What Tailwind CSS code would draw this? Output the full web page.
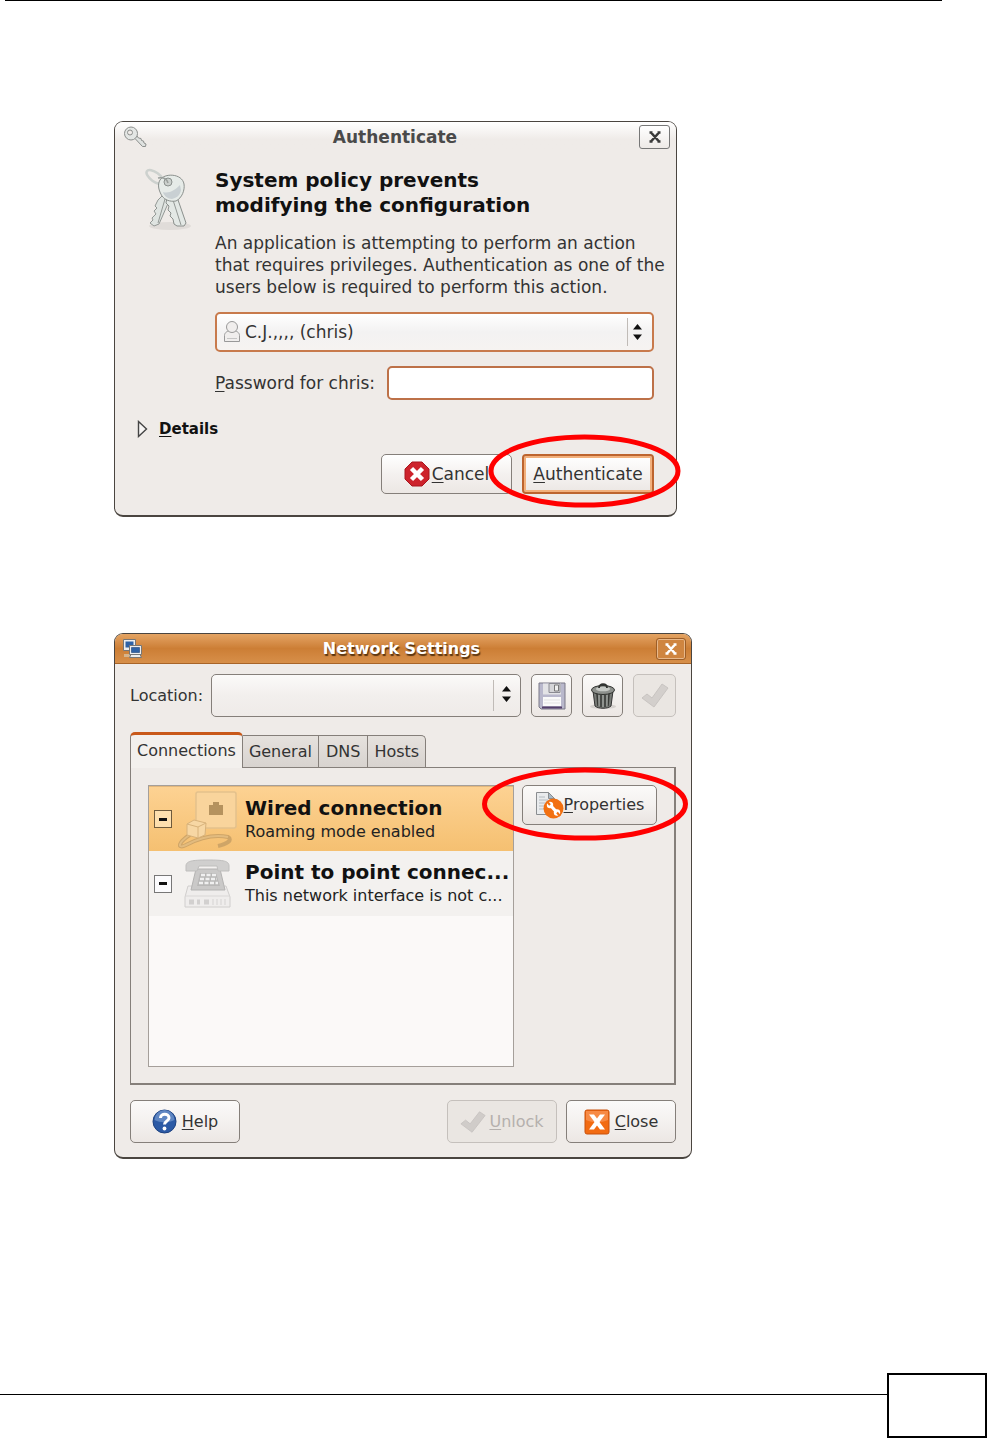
<!DOCTYPE html>
<html lang="en">
<head>
  <meta charset="UTF-8" />
  <meta name="viewport" content="width=device-width, initial-scale=1.0"/>
  <title>Network Settings</title>
  <script src="https://cdn.jsdelivr.net/npm/@tailwindcss/browser@4"></script>
</head>
<body class="min-h-screen flex flex-col bg-white text-[#333] text-base leading-[22px] font-['DejaVu_Sans','Liberation_Sans',sans-serif]">

  <!-- Page header rule -->
  <header class="ml-[5px] mr-[45px] border-t border-black"></header>

  <main class="grow pl-[114px] pr-4 pt-[120px]">

    <!-- Authenticate dialog -->
    <section class="max-w-[563px] bg-[#efebe8] border border-b-2 border-[#4a4540] rounded-[9px] text-[17px] leading-[22px]">
      <div class="h-[29px] pl-2 pr-1.5 flex items-center justify-between rounded-t-lg bg-linear-to-b from-white to-[#efebe8] to-60%">
        <svg class="w-6 h-6" viewBox="0 0 24 24" fill="none">
          <path d="M12 13.500l7.500 8h3l.5-2.500-2-1-.5-2-2-.5-.5-2-2.500-.5-1.500-2" fill="#dfe2e0" stroke="#8c8f8d"/>
          <circle cx="8" cy="8.500" r="6.500" fill="#e3e6e4" stroke="#8c8f8d"/>
          <circle cx="7" cy="7.500" r="2.500" fill="#efebe8" stroke="#8c8f8d"/>
        </svg>
        <h1 class="ml-1 font-bold text-[#4a4a4a]">Authenticate</h1>
        <button aria-label="Close" class="w-[31px] h-6 flex items-center justify-center rounded-[3px] border border-[#777] bg-linear-to-b from-white to-[#eeeae7]">
          <svg class="w-3 h-3" viewBox="0 0 12 12" stroke="#3a3a3a" stroke-width="2.600"><path d="M2 1.500l8 9M10 1.500l-8 9M.5 1.500h3M8.500 1.500h3M.5 10.500h3M8.500 10.500h3" /></svg>
        </button>
      </div>

      <div class="pt-[17px] px-[22px] pb-[21px]">
        <div class="flex">
          <svg class="w-[56px] h-[64px] ml-1 shrink-0" viewBox="0 0 56 64" fill="none">
            <ellipse cx="29" cy="58" rx="21" ry="4" fill="#e0dcd9"/>
            <ellipse cx="14" cy="9" rx="10" ry="4.500" transform="rotate(36 14 9)" stroke="#cdd1ce" stroke-width="2.500"/>
            <path d="M21 28l-4 4-3 6 2 2-3 3 2 3-4 4 1 2-3 3 4 3 5-2 11-25z" fill="#dfe4e1" stroke="#939895"/>
            <path d="M24 31l-7 24" stroke="#939895"/>
            <path d="M26 30l-1 5 3 3-1 4 3 3-1 3 3 3 1 5 3 2h7l2-3-9-26z" fill="#e3e8e5" stroke="#8b908d"/>
            <path d="M32 32l8 25" stroke="#939895"/>
            <path d="M19 12c4-7 22-7 24 4 1 6-2 14-8 17-6 1-11-1-14-5-3-5-5-11-2-16z" fill="#e6ebe8" stroke="#8b908d"/>
            <path d="M22 24c6 2 12-2 17-7l1 5c-1 6-5 8-9 9-4 0-8-3-9-7z" fill="#c9d0d3"/>
            <circle cx="27" cy="14" r="4" fill="#cbd0cd" stroke="#8b908d"/>
            <path d="M17 10c6-1 9 1 10 5" stroke="#999e9b" stroke-width="1.500"/>
          </svg>
          <div class="grow min-w-0 ml-[18px]">
            <h2 class="text-xl leading-[25px] font-bold text-[#111]">System policy prevents<br>modifying the configuration</h2>
            <p class="mt-3.5 whitespace-nowrap">An application is attempting to perform an action<br>that requires privileges. Authentication as one of the<br>users below is required to perform this action.</p>

            <div class="relative mt-3.5">
              <select aria-label="User" class="appearance-none block w-full h-10 pl-7 pr-10 text-[#333] rounded-[5px] border-2 border-[#c87a4c] bg-linear-to-b from-white via-[#f3f2f2] via-50% to-[#f6f3f1]">
                <option>C.J.,,,, (chris)</option>
              </select>
              <svg class="absolute left-2 top-2 w-[18px] h-[23px] pointer-events-none" viewBox="0 0 18 23" fill="#f0eeed" stroke="#999">
                <path d="M1.500 21.500v-6c0-3 3-5 7.500-5s7.500 2 7.500 5v6z"/>
                <circle cx="9" cy="7" r="5.500"/>
                <path d="M4 18.500h10" stroke="#c5c5c5"/>
              </svg>
              <div class="absolute right-[26px] top-1.5 bottom-1.5 border-l border-[#c0bbb7] pointer-events-none"></div>
              <svg class="absolute right-3 top-3 w-[9px] h-4 pointer-events-none" viewBox="0 0 9 16"><path d="M4.500 0L9 5.500H0zM4.500 16L0 10.500h9z" fill="#111"/></svg>
            </div>

            <div class="mt-3.5 flex items-center justify-between">
              <label for="password" class="whitespace-nowrap"><u class="underline-offset-2">P</u>assword for chris:</label>
              <input id="password" type="password" class="w-[267px] h-[34px] px-2 rounded-[5px] border-2 border-[#bd7148] bg-white outline-none">
            </div>
          </div>
        </div>

        <details class="mt-[18px]">
          <summary class="list-none flex items-center gap-[11px] text-[15px] leading-[22px] font-bold text-[#111]">
            <svg class="w-[11px] h-[18px]" viewBox="0 0 11 18" fill="#f7f5f4" stroke="#444" stroke-width="1.400"><path d="M1.500 1.500L9.500 9l-8 7.500z"/></svg>
            <span><u class="underline-offset-2">D</u>etails</span>
          </summary>
        </details>

        <div class="mt-3.5 flex justify-end gap-2.5">
          <button class="w-[131px] h-10 flex items-center justify-center gap-0.5 rounded-[5px] border border-[#857f7a] bg-linear-to-b from-white via-[#f4f1ef] via-50% to-[#ece7e4]">
            <svg class="w-[26px] h-[26px]" viewBox="0 0 26 26">
              <path d="M8 1h10l7 7v10l-7 7H8l-7-7V8z" fill="#cd232c" stroke="#a9161f"/>
              <path d="M7.500 7.500l11 11M18.500 7.500l-11 11" stroke="#fff" stroke-width="4.500"/>
            </svg>
            <span><u class="underline-offset-2">C</u>ancel</span>
          </button>
          <div class="relative">
            <button class="w-[132px] h-10 rounded-[4px] border-2 border-[#bd642e] ring-2 ring-inset ring-[#f2b07c] bg-linear-to-b from-white to-[#ece7e4]"><u class="underline-offset-2">A</u>uthenticate</button>
            <svg class="absolute -left-[34px] -top-5 w-[193px] h-[74px] max-w-none pointer-events-none" viewBox="0 0 193 74" fill="none"><ellipse cx="96.500" cy="37" rx="93.500" ry="34" stroke="#f00" stroke-width="5"/></svg>
          </div>
        </div>
      </div>
    </section>

    <!-- Network Settings dialog -->
    <section class="mt-[116px] max-w-[578px] bg-[#efebe8] border border-b-2 border-[#4a4540] rounded-[9px]">
      <div class="h-[30px] pl-2 pr-[5px] flex items-center justify-between rounded-t-lg border-b border-[#a86428] bg-linear-to-b from-[#e4a463] via-[#cc7e35] via-50% to-[#d78f49]">
        <svg class="w-5 h-5" viewBox="0 0 20 20">
          <path d="M.5.500h12v11H.5z" fill="#eee" stroke="#777"/>
          <path d="M2.500 2.500h8v6h-8z" fill="#2f62a6"/>
          <path d="M1 15h6v3H1z" fill="#d6b48c"/>
          <path d="M6.500 6.500h12v9h-12zM8 15.500h9l1.500 3h-12z" fill="#eee" stroke="#777"/>
          <path d="M8.500 8.500h8v5h-8z" fill="#2f62a6" stroke="#1f4378" stroke-width=".6"/>
        </svg>
        <h1 class="ml-1 font-bold text-white text-shadow-[1px_2px_1px_#5a3410]">Network Settings</h1>
        <button aria-label="Close" class="w-[30px] h-[22px] flex items-center justify-center rounded-[3px] border border-[#9c5e28] ring-1 ring-inset ring-[#e8b88a] bg-[#cf8540]">
          <svg class="w-3 h-3" viewBox="0 0 12 12" stroke="#fff" stroke-width="2.600"><path d="M2 1.500l8 9M10 1.500l-8 9M.5 1.500h3M8.500 1.500h3M.5 10.500h3M8.500 10.500h3" /></svg>
        </button>
      </div>

      <div class="px-[15px] pt-2.5 pb-[14px]">
        <div class="flex items-center">
          <label for="location" class="whitespace-nowrap">Location:</label>
          <div class="relative grow ml-2 mr-2.5">
            <select id="location" class="appearance-none block w-full h-[43px] px-3 rounded-[5px] border border-[#857f7a] bg-linear-to-b from-[#fbfaf9] via-[#f2efed] via-50% to-[#efebe8]">
              <option></option>
            </select>
            <div class="absolute right-[27px] top-1.5 bottom-1.5 border-l border-[#c0bbb7] pointer-events-none"></div>
            <svg class="absolute right-2.5 top-3 w-[9px] h-4 pointer-events-none" viewBox="0 0 9 16"><path d="M4.500 0L9 5.500H0zM4.500 16L0 10.500h9z" fill="#111"/></svg>
          </div>
          <div class="flex gap-2.5">
            <button aria-label="Save location" class="w-[41px] h-[43px] flex items-center justify-center rounded-[5px] border border-[#857f7a] bg-linear-to-b from-[#fbfaf9] to-[#ece7e4]">
              <svg class="w-7 h-7" viewBox="0 0 28 28">
                <path d="M1 1h26v26H3l-2-2z" fill="#b9b8cc" stroke="#7a7987"/>
                <path d="M5 1.500h18v11H5z" fill="#e3e3e6"/>
                <path d="M11 1.500h11v9H11z" fill="#d5d5d8" stroke="#8a8a92"/>
                <path d="M16.500 3h4v6h-4z" fill="#eee" stroke="#777"/>
                <path d="M5 15h18v9H5z" fill="#fafafa"/>
                <path d="M6 18h16M6 21h16" stroke="#e3e3e3"/>
                <path d="M4 25.500h20" stroke="#54406b" stroke-width="2"/>
              </svg>
            </button>
            <button aria-label="Delete location" class="w-[41px] h-[43px] flex items-center justify-center rounded-[5px] border border-[#857f7a] bg-linear-to-b from-[#fbfaf9] to-[#ece7e4]">
              <svg class="w-7 h-7" viewBox="0 0 28 28">
                <ellipse cx="14" cy="24.500" rx="13" ry="2.500" fill="#d5d1ce"/>
                <path d="M4 9h20l-2 15c-3 3-13 3-16 0z" fill="#777a76" stroke="#333"/>
                <path d="M8 12l1 12M12 13v12M16 13v12M20 12l-1 12" stroke="#383a37" stroke-width="1.500"/>
                <path d="M10 13v11M14 13v12M18 13v11" stroke="#a9aca8"/>
                <ellipse cx="14" cy="8" rx="11.500" ry="4.500" fill="#8d908c" stroke="#30322f"/>
                <ellipse cx="14" cy="7" rx="7" ry="2.300" fill="#c6c9c5"/>
                <path d="M10 6c0-5 8-5 8 0" fill="none" stroke="#30322f" stroke-width="1.800"/>
              </svg>
            </button>
            <button aria-label="Apply location" disabled class="w-[43px] h-[43px] flex items-center justify-center rounded-[5px] border border-[#c5c0bc] bg-[#eae6e2]">
              <svg class="w-7 h-7" viewBox="0 0 28 28"><path d="M1 16l5-4 5 4L21 2l6 4-14 19z" fill="#d3cfcc" stroke="#c8c4c1"/></svg>
            </button>
          </div>
        </div>

        <!-- Tabs -->
        <div role="tablist" class="relative z-10 mt-[15px] flex items-end">
          <button role="tab" aria-selected="true" class="h-9 px-1.5 -mb-px pb-0.5 rounded-t-[5px] border border-t-[3px] border-b-0 border-[#857f7a] border-t-[#c9591a] bg-[#f3f0ed]">Connections</button>
          <button role="tab" class="h-8 px-1.5 border border-l-0 border-b-0 border-[#857f7a] bg-linear-to-b from-[#e6e2de] to-[#d8d3cf]">General</button>
          <button role="tab" class="h-8 px-[7px] border border-l-0 border-b-0 border-[#857f7a] bg-linear-to-b from-[#e6e2de] to-[#d8d3cf]">DNS</button>
          <button role="tab" class="h-8 px-1.5 rounded-tr-[5px] border border-l-0 border-b-0 border-[#857f7a] bg-linear-to-b from-[#e6e2de] to-[#d8d3cf]">Hosts</button>
        </div>
        <div role="tabpanel" class="h-[318px] p-[17px] pb-4 flex gap-2 border border-b-2 border-r-2 border-[#857f7a]">
          <ul class="w-[366px] bg-[#fbf9f8] border border-[#a59f9a]">
            <li class="h-[65px] pl-[5px] flex items-center bg-linear-to-b from-[#fdd292] to-[#f5c071] border-t border-[#e3b77c]">
              <button aria-label="Collapse" class="w-[18px] h-[18px] flex items-center justify-center border border-[#6e5a3c] bg-[#fddfae]"><span class="w-2 h-[3px] bg-[#111]"></span></button>
              <svg class="w-[60px] h-[60px] ml-1.5" viewBox="0 0 60 60" fill="none">
                <rect x="18" y="3" width="40" height="36" rx="2" fill="#f9d49c" stroke="#e3c18c" stroke-width="1.500"/>
                <path d="M31 26V16h4v-3h6v3h4v10z" fill="#b5925e"/>
                <path d="M13 45C-2 55 0 60 8 56C25 47 40 46 50 48c5 3-1 7-10 9" stroke="#cfa567" stroke-width="4"/>
                <path d="M13 45C-2 55 0 60 8 56C25 47 40 46 50 48" stroke="#e2bb7f" stroke-width="2"/>
                <path d="M9 35l7-4 12 3-1 12-7 3-11-3z" fill="#f7d7a4" stroke="#d8b27a"/>
                <path d="M9 35l11 3 8-4M20 38v11" stroke="#d8b27a"/>
              </svg>
              <div class="ml-[7px] whitespace-nowrap text-[#222]">
                <h3 class="text-xl leading-[25px] font-bold text-[#111]">Wired connection</h3>
                <p>Roaming mode enabled</p>
              </div>
            </li>
            <li class="h-[65px] pl-[5px] flex items-center bg-[#f3f1ef]">
              <button aria-label="Collapse" class="w-[18px] h-[18px] flex items-center justify-center border border-[#777] bg-[#fbfbfd]"><span class="w-2 h-[3px] bg-[#111]"></span></button>
              <svg class="w-[60px] h-[60px] ml-1.5" viewBox="0 0 60 60" fill="none">
                <path d="M10 32h38l4 11v10H7V43z" fill="#efedec" stroke="#d0cecd"/>
                <path d="M7 42h45" stroke="#d9d7d6"/>
                <path d="M11 48h5M19 48h3M26 48h5" stroke="#d2d0cf" stroke-width="5"/>
                <path d="M35 45v6M39 45v6M43 45v6M47 45v6" stroke="#e2e0df" stroke-width="2"/>
                <path d="M18 15h24l5 21H13z" fill="#cac9c8" stroke="#b4b3b2"/>
                <path d="M22 19h16l4 13H19z" fill="#b9b8b7"/>
                <path d="M23 21h15M22 25h17M21 29h19" stroke="#f0f0f0" stroke-width="2.500" stroke-dasharray="4 1.500"/>
                <path d="M8 12c0-5 6-6 22-6s21 1 21 6v5H40l-1-5H21l-2 5H8z" fill="#d0cfce" stroke="#bfbebd"/>
              </svg>
              <div class="ml-[7px] whitespace-nowrap text-[#222]">
                <h3 class="text-xl leading-[25px] font-bold text-[#111]">Point to point connec...</h3>
                <p>This network interface is not c...</p>
              </div>
            </li>
          </ul>
          <div class="relative">
            <button class="w-[135px] h-10 flex items-center justify-center rounded-[5px] border border-[#857f7a] bg-linear-to-b from-[#fbfaf9] via-[#f4f1ef] via-50% to-[#e9e4e1]">
              <svg class="w-[29px] h-[28px]" viewBox="0 0 29 28">
                <path d="M1.500 1.500h12l6 6v16h-18z" fill="#e9ebed" stroke="#8a8d90"/>
                <path d="M13.500 1.500v6h6z" fill="#a9b9c6" stroke="#8a8d90"/>
                <path d="M4 6h6M4 9h9M4 12h9M4 15h7M4 18h7" stroke="#b4bbc1"/>
                <circle cx="18.500" cy="17.500" r="10" fill="#f27011"/>
                <path d="M16 15l6 6.500" stroke="#fff" stroke-width="3.200"/>
                <circle cx="15" cy="14" r="3.200" fill="#fff"/>
                <circle cx="22" cy="21.500" r="3.200" fill="#fff"/>
                <path d="M12 10.500l3 3.500M25 25l-3-3.500" stroke="#f27011" stroke-width="2.200"/>
              </svg>
              <span><u class="underline-offset-2">P</u>roperties</span>
            </button>
            <svg class="absolute -left-10 -top-[18px] w-[206px] h-[74px] max-w-none pointer-events-none" viewBox="0 0 206 74" fill="none"><ellipse cx="103" cy="37" rx="100.500" ry="34" stroke="#f00" stroke-width="5"/></svg>
          </div>
        </div>

        <div class="mt-[15px] flex gap-[9px]">
          <button class="w-[110px] h-[43px] mr-auto flex items-center justify-center gap-[5px] rounded-[5px] border border-[#857f7a] bg-linear-to-b from-[#fbfaf9] via-[#f4f1ef] via-50% to-[#ece7e4]">
            <svg class="w-[25px] h-[25px]" viewBox="0 0 25 25">
              <circle cx="12.500" cy="12.500" r="11.500" fill="#2c5aa5" stroke="#1e4280"/>
              <path d="M2.500 11a10 10 0 0 1 20 0c-6 3-14 3-20 0z" fill="#5f86c2"/>
              <path d="M8.500 9c0-5 8.500-5 8.500 0 0 3-4.500 3-4.500 6.500" fill="none" stroke="#fff" stroke-width="3"/>
              <circle cx="12.500" cy="19.500" r="1.900" fill="#fff"/>
            </svg>
            <span><u class="underline-offset-2">H</u>elp</span>
          </button>
          <button disabled class="w-[110px] h-[43px] flex items-center justify-center gap-[3px] rounded-[5px] border border-[#c5c0bc] bg-[#eae6e2] text-[#b5b0ad]">
            <svg class="w-[26px] h-[26px]" viewBox="0 0 28 28"><path d="M1 16l5-4 5 4L21 3l6 4-14 18z" fill="#d0ccc9" stroke="#c8c4c1"/></svg>
            <span><u class="underline-offset-2">U</u>nlock</span>
          </button>
          <button class="w-[110px] h-[43px] flex items-center justify-center gap-[5px] rounded-[5px] border border-[#857f7a] bg-linear-to-b from-[#fbfaf9] via-[#f4f1ef] via-50% to-[#ece7e4]">
            <svg class="w-[26px] h-[26px]" viewBox="0 0 26 26">
              <rect x="1" y="1" width="24" height="24" rx="2" fill="#f26b12" stroke="#c9500a"/>
              <path d="M2 2h22v9c-7 3-15 3-22 0z" fill="#f78a45"/>
              <path d="M5 5.500h5l3 4 3-4h5L15.500 13l5.500 7.500h-5l-3-4-3 4H5l5.500-7.500z" fill="#fff"/>
            </svg>
            <span><u class="underline-offset-2">C</u>lose</span>
          </button>
        </div>
      </div>
    </section>
  </main>

  <!-- Page footer: rule and empty page number box -->
  <footer class="flex">
    <div class="grow mt-[21px] border-t border-black"></div>
    <div class="w-[100px] h-[65px] border-2 border-black"></div>
  </footer>

</body>
</html>
